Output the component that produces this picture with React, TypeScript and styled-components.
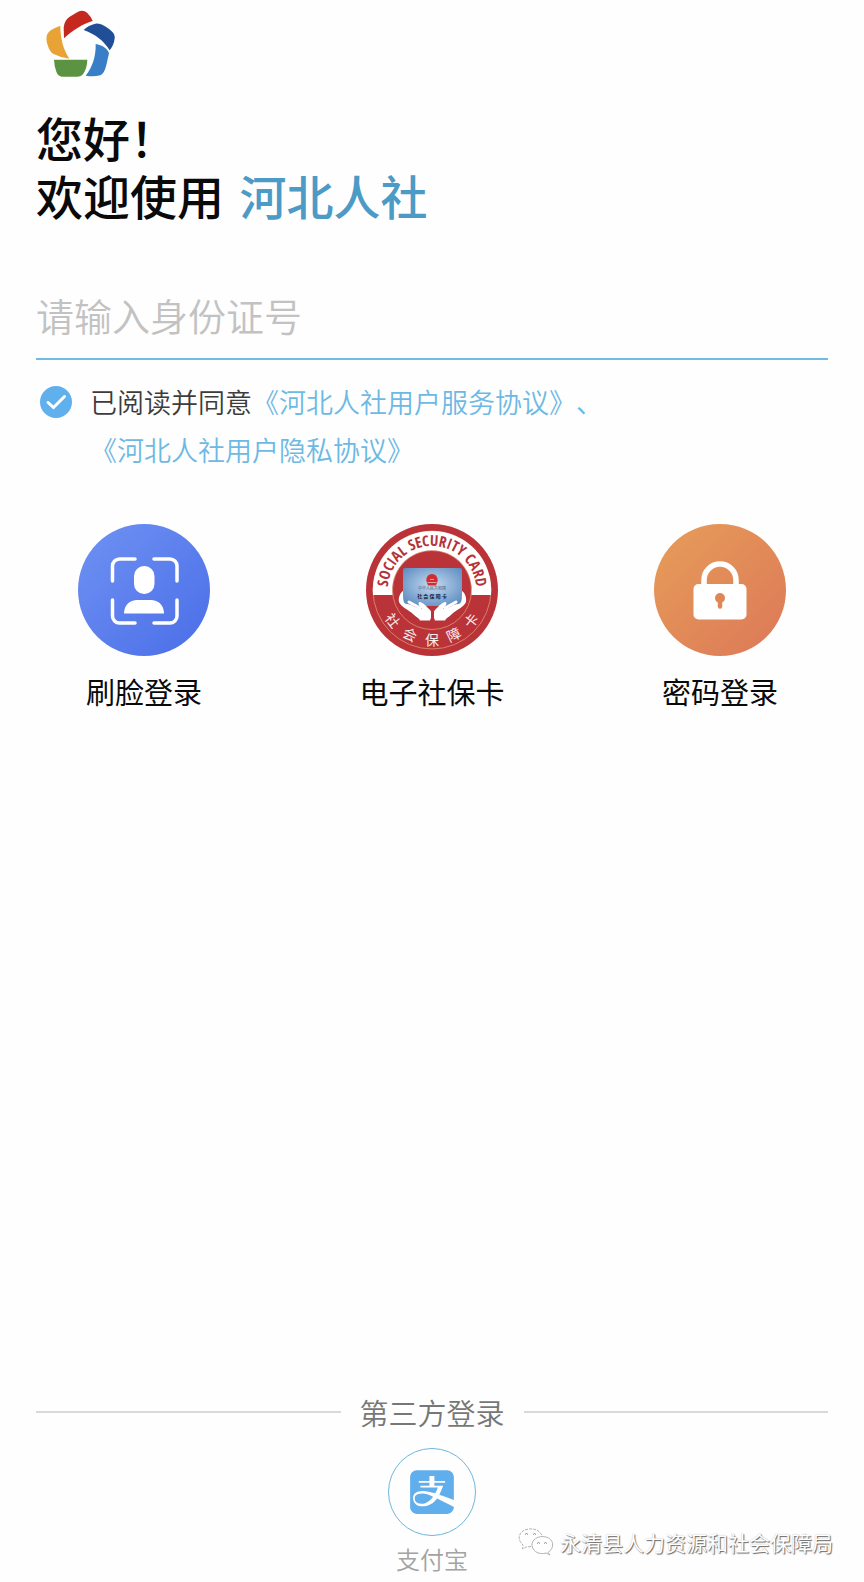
import React, { useState } from "react";
import styled, { createGlobalStyle } from "styled-components";
import { FaAlipay } from "react-icons/fa";

const GlobalStyle = createGlobalStyle`
  *, *::before, *::after { box-sizing: border-box; }
  body {
    margin: 0;
    background: #fefefe;
    color: #0a0a0a;
    font-family: "Noto Sans CJK SC", sans-serif;
    text-spacing-trim: space-all;
  }
  button, input { font-family: inherit; }
`;

const Page = styled.div`
  position: relative;
  display: flex;
  flex-direction: column;
  min-height: 100vh;
  padding: 10px 0 6px;
`;

const Section = styled.div`
  display: flex;
  flex-direction: column;
  padding: 0 36px;
`;

const Logo = styled.svg`
  width: 69px;
  height: 67px;
  margin: 0 10px 31px;
`;

const Heading = styled.h1`
  margin: 0;
  font-size: 47px;
  line-height: 58px;
  font-weight: 500;
`;

const Brand = styled.span`
  margin-left: 5px;
  color: #4c9ac6;
`;

const IdInput = styled.input`
  width: 100%;
  height: 88px;
  margin-top: 48px;
  padding: 0 0 2px;
  border: 0;
  border-bottom: 2px solid #6fbbe3;
  background: transparent;
  color: #333;
  font-size: 38px;
  font-weight: 350;
  outline: none;
  &::placeholder { color: #c2c2c2; opacity: 1; }
`;

const Agreement = styled.div`
  display: flex;
  align-items: flex-start;
  gap: 18px;
  margin-top: 18px;
  padding-left: 4px;
  color: #6db9e4;
  font-size: 27px;
  line-height: 48px;
  font-weight: 350;
`;

const CheckHolder = styled.span`
  display: grid;
  flex: none;
  place-items: center;
  width: 32px;
  height: 48px;
  & > * { grid-area: 1 / 1; }
`;

const CheckInput = styled.input`
  appearance: none;
  width: 32px;
  height: 32px;
  margin: 0;
  border: 2px solid #61b0ee;
  border-radius: 50%;
  &:checked { background: #61b0ee; }
`;

const CheckMark = styled.svg`
  width: 32px;
  height: 32px;
  pointer-events: none;
`;

const AgreeLabel = styled.label`
  color: #3c3c3c;
`;

const AgreeLink = styled.a`
  color: inherit;
  text-decoration: none;
`;

const Methods = styled.div`
  display: grid;
  grid-template-columns: repeat(3, 1fr);
  margin-top: 50px;
`;

const Method = styled.button`
  display: flex;
  flex-direction: column;
  align-items: center;
  gap: 17px;
  padding: 0;
  border: 0;
  background: none;
  color: #0a0a0a;
  font-size: 29px;
  line-height: 36px;
  cursor: pointer;
`;

const MethodIcon = styled.svg`
  width: 132px;
  height: 132px;
`;

const Footer = styled.footer`
  display: flex;
  flex-direction: column;
  align-items: center;
  margin-top: auto;
  padding: 48px 36px 0;
`;

const Divider = styled.div`
  display: flex;
  align-items: center;
  align-self: stretch;
  gap: 19px;
  margin-bottom: 16px;
  color: #777;
  font-size: 29px;
  line-height: 40px;
  font-weight: 350;
  &::before, &::after {
    content: "";
    flex: 1;
    height: 2px;
    background: #d9d9d9;
  }
`;

const Alipay = styled.button`
  display: flex;
  flex-direction: column;
  align-items: center;
  gap: 6px;
  padding: 0;
  border: 0;
  background: none;
  color: #a3a3a3;
  font-size: 24px;
  line-height: 34px;
  font-weight: 350;
  cursor: pointer;
`;

const AlipayRing = styled.span`
  display: grid;
  place-items: center;
  width: 88px;
  height: 88px;
  border: 1px solid #6fb6dc;
  border-radius: 50%;
  color: #60aeec;
  & > svg { width: 44px; height: 50px; }
`;

const Watermark = styled.div`
  position: absolute;
  right: 31px;
  bottom: 23px;
  display: flex;
  align-items: center;
  gap: 6px;
  color: #fff;
  font-size: 21px;
  line-height: 34px;
  text-shadow: 1px 1px 1px #666, 0 0 1px #bbb;
`;

const WechatMark = styled.svg`
  width: 36px;
  height: 30px;
`;

function FaceIcon() {
  return (
    <MethodIcon viewBox="0 0 132 132" aria-hidden="true">
      <defs>
        <linearGradient id="face" x1="0" y1="0" x2="1" y2="1">
          <stop offset="0" stopColor="#6f92f3" />
          <stop offset="1" stopColor="#4a6de8" />
        </linearGradient>
      </defs>
      <circle cx="66" cy="66" r="66" fill="url(#face)" />
      <path
        d="M34.500 57V42a7 7 0 0 1 7-7H57M76 35h16a7 7 0 0 1 7 7v15M99 76v16a7 7 0 0 1-7 7H76M57 99H41.500a7 7 0 0 1-7-7V76"
        fill="none" stroke="#fff" strokeWidth="3.500" strokeLinecap="round"
      />
      <rect x="56" y="42" width="20.500" height="28" rx="10" fill="#fff" />
      <path d="M46 89.500C46 81 52 76 59 76H73C80 76 86 81 86 89.500Z" fill="#fff" />
    </MethodIcon>
  );
}

function CardIcon() {
  return (
    <MethodIcon viewBox="-66 -66 132 132" aria-hidden="true">
      <defs>
        <path id="arcTop" d="M-43.800 6A44.200 44.200 0 1 1 43.800 6" />
        <radialGradient id="plate" cx="0.5" cy="0.45" r="0.7">
          <stop offset="0" stopColor="#c5dcf1" />
          <stop offset="1" stopColor="#5585bd" />
        </radialGradient>
      </defs>
      <circle r="66" fill="#b93338" />
      <circle r="59" fill="none" stroke="#d98069" />
      <circle r="39.500" fill="none" stroke="#d98069" />
      <path d="M-59 5A59.200 59.200 0 1 1 59 5H39.500A39.800 39.800 0 1 0 -39.500 5Z" fill="#fff" />
      <text fill="#b5323a" fontFamily='"Open Sans Condensed", "Liberation Sans", sans-serif' fontWeight="700" fontSize="15" textAnchor="middle">
        <textPath href="#arcTop" startOffset="50%">SOCIAL SECURITY CARD</textPath>
      </text>
      {["社", "会", "保", "障", "卡"].map((c, i) => (
        <text key={c} transform={`rotate(${52 - i * 26}) translate(0 55)`} fill="#fbeeee" fontSize="14" textAnchor="middle">{c}</text>
      ))}
      <rect x="-29" y="-22" width="59" height="38" rx="2" fill="url(#plate)" />
      <path d="M-5-7C-7-12-4-16 0-16S7-12 5-7L4-4.500H-4Z" fill="#d12c32" />
      <path d="M-4.500-7.500h9M-2-10.500h4" stroke="#e8a39c" />
      <text y="0" fill="#4a5876" fontSize="4" textAnchor="middle">中华人民共和国</text>
      <text y="8" fill="#142444" fontSize="5" fontWeight="700" textAnchor="middle">社 会 保 障 卡</text>
      <g id="hand" fill="#fff">
        <path d="M-29 1C-31 2-34 7-33 12C-31 17-23 20-19 24C-16 27-13 28-12 30.500H-2C0 26 0 22-2 20C-5 17-8 13-12 12C-15 12-13 16-10 19C-17 18-20 14-25 14C-29 14-29 9-29 1Z" />
        <path d="M-23 12-12 18" stroke="#fff" strokeWidth="3" strokeLinecap="round" />
      </g>
      <use href="#hand" transform="translate(1 0) scale(-1 1)" />
      <path d="M.500 19V31" stroke="#b93338" strokeWidth="3" />
    </MethodIcon>
  );
}

function LockIcon() {
  return (
    <MethodIcon viewBox="0 0 132 132" aria-hidden="true">
      <defs>
        <linearGradient id="lock" x1="0" y1="0" x2="1" y2="1">
          <stop offset="0" stopColor="#e79d59" />
          <stop offset="1" stopColor="#dc7858" />
        </linearGradient>
      </defs>
      <circle cx="66" cy="66" r="66" fill="url(#lock)" />
      <path d="M50 63V56a16 16 0 0 1 32 0v7" fill="none" stroke="#fff" strokeWidth="5.500" />
      <rect x="39.500" y="60" width="53" height="35.500" rx="5" fill="#fff" />
      <circle cx="66" cy="74" r="5" fill="#df8756" />
      <path d="M66 75v7.500" stroke="#df8756" strokeWidth="4.500" strokeLinecap="round" />
    </MethodIcon>
  );
}

const methods = [
  { label: "刷脸登录", Icon: FaceIcon },
  { label: "电子社保卡", Icon: CardIcon },
  { label: "密码登录", Icon: LockIcon },
];

export default function App() {
  const [agreed, setAgreed] = useState(true);
  return (
    <>
      <GlobalStyle />
      <Page>
        <Section>
          <Logo viewBox="77 30 207 201" aria-hidden="true">
            <path fill="#c5281f" d="M131 115L130 83Q132 60 148 50L172 36Q188 28 200 38Q213 50 217 63C187 72 158 90 131 115Z" />
            <path fill="#204f98" d="M190 90Q205 75 225 71Q240 69 262 84Q286 100 283 115Q281 135 268 151C250 122 226 103 190 90Z" />
            <path fill="#387fc8" d="M226 132C245 135 262 145 266 160L258 195Q252 221 240 226Q220 231 196 227C216 202 227 170 226 132Z" />
            <path fill="#5b9343" d="M101 179H201Q200 205 189 221Q183 230 170 230H125Q113 229 108 215Q102 200 101 179Z" />
            <path fill="#e9a235" d="M120 77C120 115 129 149 147 176Q119 172 98 161Q87 154 82 135Q75 117 81 102Q88 88 120 77Z" />
          </Logo>
          <Heading>
            您好！
            <br />
            欢迎使用 <Brand>河北人社</Brand>
          </Heading>
          <IdInput type="text" placeholder="请输入身份证号" aria-label="请输入身份证号" />
          <Agreement>
            <CheckHolder>
              <CheckInput id="agree" type="checkbox" checked={agreed} onChange={(e) => setAgreed(e.target.checked)} />
              {agreed && (
                <CheckMark viewBox="0 0 32 32" aria-hidden="true">
                  <path d="M8 16.500 13.500 21.500 24.500 10.500" fill="none" stroke="#fff" strokeWidth="3" strokeLinecap="round" />
                </CheckMark>
              )}
            </CheckHolder>
            <div>
              <AgreeLabel htmlFor="agree">已阅读并同意</AgreeLabel>
              <AgreeLink href="#service">《河北人社用户服务协议》</AgreeLink>、
              <br />
              <AgreeLink href="#privacy">《河北人社用户隐私协议》</AgreeLink>
            </div>
          </Agreement>
        </Section>
        <Methods>
          {methods.map(({ label, Icon }) => (
            <Method key={label} type="button">
              <Icon />
              {label}
            </Method>
          ))}
        </Methods>
        <Footer>
          <Divider>第三方登录</Divider>
          <Alipay type="button">
            <AlipayRing>
              <FaAlipay aria-hidden="true" />
            </AlipayRing>
            支付宝
          </Alipay>
        </Footer>
        <Watermark>
          <WechatMark viewBox="0 0 36 30" fill="none" stroke="#b4b4b4" aria-hidden="true">
            <path d="M13 19.500 8 20 4.500 22 5 18C-2 12 1 3 11 2C18 1 23 5 24 9" strokeDasharray="3 1" />
            <path d="M30 25.500C37 21 36 12 28 10C20 8 13 13 14 19C15 25 22 28 28 26L32 28Z" fill="#fff" />
            <path d="M7 7.500q1.500-2 3 0M15 7.500q1.500-2 3 0M19 16.500q1.500-2 3 0M26 16.500q1.500-2 3 0" stroke="#888" />
          </WechatMark>
          永清县人力资源和社会保障局
        </Watermark>
      </Page>
    </>
  );
}
